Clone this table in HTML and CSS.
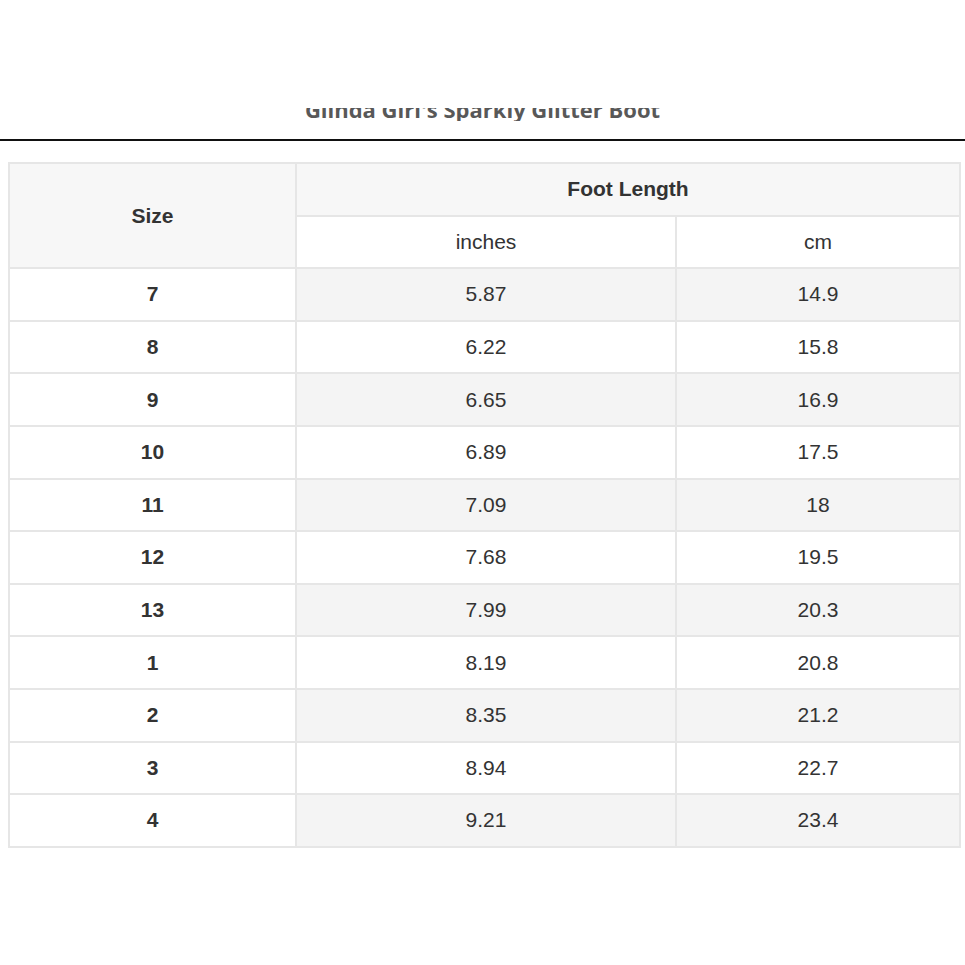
FILE: index.html
```html
<!DOCTYPE html>
<html>
<head>
<meta charset="utf-8">
<link rel="stylesheet" href="styles.css">
</head>
<body>
<header class="page-head">
  <div class="title-clip"><h1 class="title">Glinda Girl's Sparkly Glitter Boot</h1></div>
</header>
<main class="content">
<table class="size-table">
  <colgroup>
    <col class="c-size"><col class="c-in"><col class="c-cm">
  </colgroup>
  <thead>
    <tr>
      <th class="head" rowspan="2">Size</th>
      <th class="head" colspan="2">Foot Length</th>
    </tr>
    <tr>
      <td class="unit">inches</td>
      <td class="unit">cm</td>
    </tr>
  </thead>
  <tbody>
    <tr class="odd"><th>7</th><td>5.87</td><td>14.9</td></tr>
    <tr><th>8</th><td>6.22</td><td>15.8</td></tr>
    <tr class="odd"><th>9</th><td>6.65</td><td>16.9</td></tr>
    <tr><th>10</th><td>6.89</td><td>17.5</td></tr>
    <tr class="odd"><th>11</th><td>7.09</td><td>18</td></tr>
    <tr><th>12</th><td>7.68</td><td>19.5</td></tr>
    <tr class="odd"><th>13</th><td>7.99</td><td>20.3</td></tr>
    <tr><th>1</th><td>8.19</td><td>20.8</td></tr>
    <tr class="odd"><th>2</th><td>8.35</td><td>21.2</td></tr>
    <tr><th>3</th><td>8.94</td><td>22.7</td></tr>
    <tr class="odd"><th>4</th><td>9.21</td><td>23.4</td></tr>
  </tbody>
</table>
</main>
</body>
</html>
```
FILE: styles.css
```css
html, body {
  margin: 0;
  padding: 0;
  background: #ffffff;
}
body {
  font-family: "Liberation Sans", Arial, sans-serif;
  color: #333333;
}
.page-head {
  height: 139px;
  border-bottom: 2px solid #111111;
  display: flex;
  flex-direction: column;
  align-items: center;
}
.title-clip {
  margin-top: 108px;
  height: 13px;
  overflow: hidden;
}
.title {
  margin: -12px 0 0 0;
  font-family: "Open Sans", sans-serif;
  font-weight: 700;
  font-size: 22px;
  line-height: 26px;
  color: #3c3c3c;
  white-space: nowrap;
  opacity: 0.85;
}
.content {
  padding: 21px 5px 0 8px;
}
.size-table {
  width: 951px;
  border-collapse: collapse;
  table-layout: fixed;
  font-size: 21px;
}
.c-size { width: 287px; }
.c-in { width: 380px; }
.c-cm { width: 284px; }
.size-table th,
.size-table td {
  border: 2px solid #e6e6e6;
  text-align: center;
  vertical-align: middle;
  padding: 0;
  height: 50.6px;
  color: #333333;
}
.size-table th {
  font-weight: 700;
}
.size-table .head {
  background: #f7f7f7;
}
.size-table .unit {
  background: #ffffff;
}
.size-table tbody th {
  background: #ffffff;
}
.size-table tbody tr.odd td {
  background: #f4f4f4;
}
```
